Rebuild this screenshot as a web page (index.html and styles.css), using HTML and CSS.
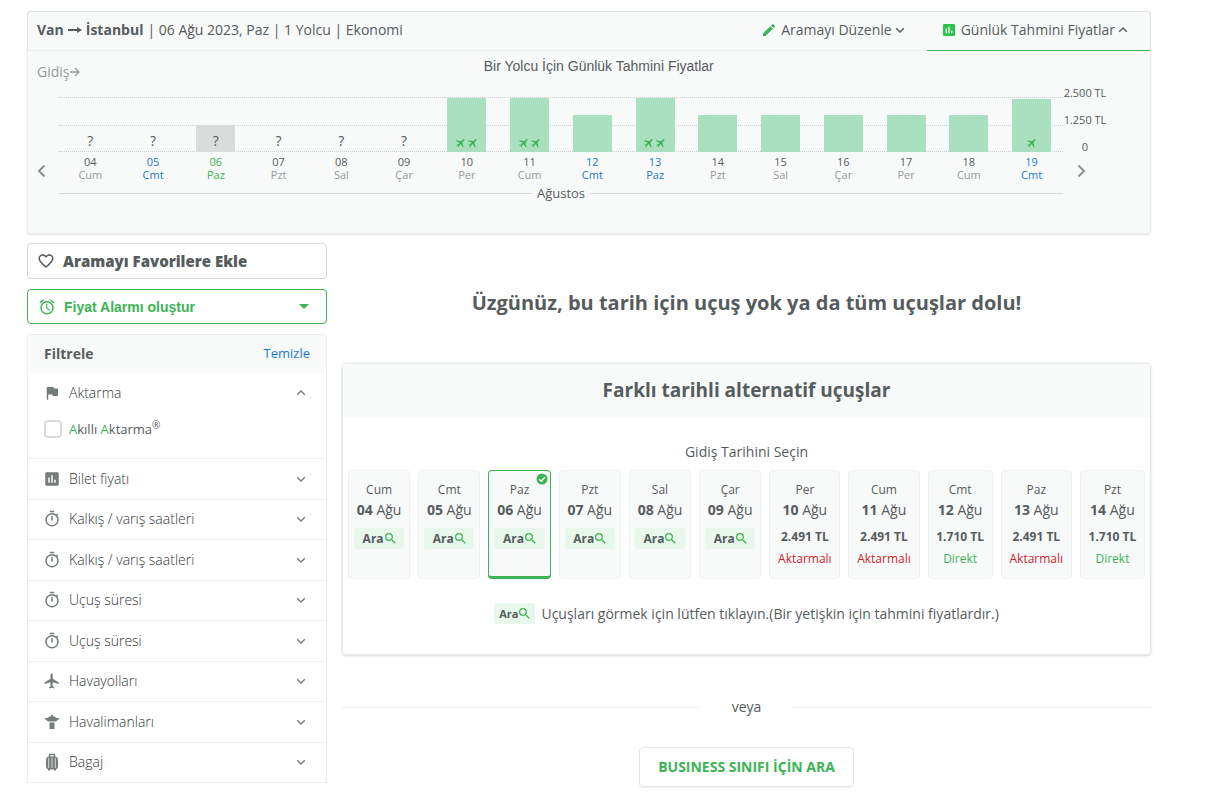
FILE: index.html
```html
<!DOCTYPE html>
<html lang="tr">
<head>
<meta charset="utf-8">
<meta name="viewport" content="width=device-width, initial-scale=1">
<title>Van - İstanbul uçuşları</title>
<link rel="stylesheet" href="styles.css">
</head>
<body>
<svg class="sprite" aria-hidden="true">
  <symbol id="chevron" viewBox="0 0 10 10"><path d="M1.2 3.2 5 7l3.800-3.800" fill="none" stroke="currentColor" stroke-width="1.400"/></symbol>
  <symbol id="search" viewBox="3 3 18 18"><path fill="currentColor" d="M15.500 14h-.79l-.28-.27A6.470 6.470 0 0 0 16 9.500 6.500 6.500 0 1 0 9.500 16c1.610 0 3.090-.59 4.230-1.570l.27.28v.79l5 4.990L20.490 19l-4.990-5zm-6 0C7.010 14 5 11.990 5 9.500S7.010 5 9.500 5 14 7.010 14 9.500 11.990 14 9.500 14z"/></symbol>
  <symbol id="plane" viewBox="0 0 24 24"><path fill="currentColor" d="M21 16v-2l-8-5V3.500C13 2.670 12.330 2 11.500 2S10 2.670 10 3.500V9l-8 5v2l8-2.500V19l-2 1.500V22l3.500-1 3.500 1v-1.500L13 19v-5.500l8 2.500z"/></symbol>
  <symbol id="stats" viewBox="0 0 24 24"><path fill="currentColor" d="M19 3H5c-1.100 0-2 .9-2 2v14c0 1.100.9 2 2 2h14c1.100 0 2-.9 2-2V5c0-1.100-.9-2-2-2zM9 17H7v-7h2v7zm4 0h-2V7h2v10zm4 0h-2v-4h2v4z"/></symbol>
  <symbol id="timer" viewBox="0 0 24 24"><path fill="currentColor" d="M15 1H9v2h6V1zm-4 13h2V8h-2v6zm8.030-6.610 1.420-1.420c-.43-.51-.9-.99-1.410-1.410l-1.420 1.420A8.960 8.960 0 0 0 12 4a9 9 0 1 0 7.030 3.390zM12 20a7 7 0 1 1 0-14 7 7 0 0 1 0 14z"/></symbol>
</svg>

<main class="page">
  <section class="trip">
    <header class="trip-bar">
      <p class="route"><strong>Van</strong>
        <svg class="route-arrow" viewBox="0 0 14 10" aria-hidden="true"><path d="M0 5h10" stroke="currentColor" stroke-width="2"/><path d="M9 2l5 3-5 3z" fill="currentColor"/></svg>
        <strong>İstanbul</strong><span>| 06 Ağu 2023, Paz | 1 Yolcu | Ekonomi</span></p>
      <button class="tab" type="button">
        <svg class="i16 green" viewBox="0 0 24 24" aria-hidden="true"><path fill="currentColor" d="M3 17.250V21h3.750L17.810 9.940l-3.750-3.750L3 17.250zM20.710 7.040a1 1 0 0 0 0-1.410l-2.340-2.340a1 1 0 0 0-1.410 0l-1.830 1.830 3.750 3.750 1.830-1.830z"/></svg>
        <span>Aramayı Düzenle</span><svg class="i10"><use href="#chevron"/></svg>
      </button>
      <button class="tab tab-on" type="button">
        <svg class="i16 bright"><use href="#stats"/></svg>
        <span>Günlük Tahmini Fiyatlar</span><svg class="i10 up"><use href="#chevron"/></svg>
      </button>
    </header>

    <div class="prices">
      <div class="prices-head">
        <span class="leg">Gidiş<svg class="i12" viewBox="0 0 12 12" aria-hidden="true"><path d="M1 6h9M6 2l4 4-4 4" fill="none" stroke="currentColor" stroke-width="1.400"/></svg></span>
        <h2 class="prices-title">Bir Yolcu İçin Günlük Tahmini Fiyatlar</h2>
      </div>
      <div class="chart">
        <button class="arrow prev" type="button" aria-label="Önceki günler"><svg viewBox="0 0 9 14"><path d="M7.500 1.500 2 7l5.500 5.500" fill="none" stroke="currentColor" stroke-width="2"/></svg></button>
        <div class="plot">
          <div class="rules"><i></i><i></i></div>
          <ul class="days">
            <li><div class="slot">?</div><b>04</b><span>Cum</span></li>
            <li class="weekend"><div class="slot">?</div><b>05</b><span>Cmt</span></li>
            <li class="today"><div class="slot"><em>?</em></div><b>06</b><span>Paz</span></li>
            <li><div class="slot">?</div><b>07</b><span>Pzt</span></li>
            <li><div class="slot">?</div><b>08</b><span>Sal</span></li>
            <li><div class="slot">?</div><b>09</b><span>Çar</span></li>
            <li><div class="slot"><div class="bar" style="height:98%"><svg><use href="#plane"/></svg><svg><use href="#plane"/></svg></div></div><b>10</b><span>Per</span></li>
            <li><div class="slot"><div class="bar" style="height:98%"><svg><use href="#plane"/></svg><svg><use href="#plane"/></svg></div></div><b>11</b><span>Cum</span></li>
            <li class="weekend"><div class="slot"><div class="bar" style="height:67%"></div></div><b>12</b><span>Cmt</span></li>
            <li class="weekend"><div class="slot"><div class="bar" style="height:98%"><svg><use href="#plane"/></svg><svg><use href="#plane"/></svg></div></div><b>13</b><span>Paz</span></li>
            <li><div class="slot"><div class="bar" style="height:67%"></div></div><b>14</b><span>Pzt</span></li>
            <li><div class="slot"><div class="bar" style="height:67%"></div></div><b>15</b><span>Sal</span></li>
            <li><div class="slot"><div class="bar" style="height:67%"></div></div><b>16</b><span>Çar</span></li>
            <li><div class="slot"><div class="bar" style="height:67%"></div></div><b>17</b><span>Per</span></li>
            <li><div class="slot"><div class="bar" style="height:67%"></div></div><b>18</b><span>Cum</span></li>
            <li class="weekend"><div class="slot"><div class="bar" style="height:96%"><svg><use href="#plane"/></svg></div></div><b>19</b><span>Cmt</span></li>
          </ul>
          <div class="month">Ağustos</div>
        </div>
        <div class="scale">
          <span>2.500 TL</span><span>1.250 TL</span><span>0</span>
          <button class="arrow next" type="button" aria-label="Sonraki günler"><svg viewBox="0 0 9 14"><path d="M1.500 1.500 7 7l-5.500 5.500" fill="none" stroke="currentColor" stroke-width="2"/></svg></button>
        </div>
      </div>
    </div>
  </section>

  <div class="columns">
    <aside class="side">
      <button class="favorite" type="button">
        <svg class="i18" viewBox="0 0 24 24" aria-hidden="true"><path fill="currentColor" d="M16.500 3c-1.740 0-3.410.81-4.500 2.090C10.910 3.810 9.240 3 7.500 3 4.420 3 2 5.420 2 8.500c0 3.780 3.400 6.860 8.550 11.540L12 21.350l1.450-1.320C18.600 15.360 22 12.280 22 8.500 22 5.420 19.580 3 16.500 3zm-4.400 15.550-.1.100-.1-.1C7.140 14.240 4 11.390 4 8.500 4 6.500 5.500 5 7.500 5c1.540 0 3.040.99 3.570 2.360h1.870C13.460 5.990 14.960 5 16.500 5c2 0 3.500 1.500 3.500 3.500 0 2.890-3.140 5.740-7.900 10.050z"/></svg>
        <span>Aramayı Favorilere Ekle</span>
      </button>
      <button class="alarm" type="button">
        <svg class="i18" viewBox="0 0 24 24" aria-hidden="true"><path fill="currentColor" d="M22 5.720l-4.600-3.860-1.290 1.530 4.600 3.860L22 5.720zM7.880 3.390 6.600 1.860 2 5.710l1.290 1.530 4.590-3.850zM12.500 8H11v6l4.750 2.850.75-1.230-4-2.370V8zM12 4a9 9 0 1 0 0 18 9 9 0 0 0 0-18zm0 16a7 7 0 1 1 0-14 7 7 0 0 1 0 14z"/></svg>
        <span>Fiyat Alarmı oluştur</span>
        <svg class="caret" viewBox="0 0 10 5" aria-hidden="true"><path fill="currentColor" d="M0 0h10L5 5z"/></svg>
      </button>

      <section class="filters">
        <header class="filters-head"><h2>Filtrele</h2><a href="#">Temizle</a></header>
        <div class="open-filter">
          <button class="filter" type="button"><svg class="i18" viewBox="0 0 24 24"><path fill="currentColor" d="M14.400 6 14 4H5v17h2v-7h5.600l.4 2h7V6z"/></svg><span>Aktarma</span><svg class="i10 up"><use href="#chevron"/></svg></button>
          <label class="check"><input type="checkbox"><span><mark>A</mark>kıllı <mark>A</mark>ktarma<sup>®</sup></span></label>
        </div>
        <div class="filter-list">
          <button class="filter" type="button"><svg class="i18"><use href="#stats"/></svg><span>Bilet fiyatı</span><svg class="i10"><use href="#chevron"/></svg></button>
          <button class="filter" type="button"><svg class="i18"><use href="#timer"/></svg><span>Kalkış / varış saatleri</span><svg class="i10"><use href="#chevron"/></svg></button>
          <button class="filter" type="button"><svg class="i18"><use href="#timer"/></svg><span>Kalkış / varış saatleri</span><svg class="i10"><use href="#chevron"/></svg></button>
          <button class="filter" type="button"><svg class="i18"><use href="#timer"/></svg><span>Uçuş süresi</span><svg class="i10"><use href="#chevron"/></svg></button>
          <button class="filter" type="button"><svg class="i18"><use href="#timer"/></svg><span>Uçuş süresi</span><svg class="i10"><use href="#chevron"/></svg></button>
          <button class="filter" type="button"><svg class="i18"><use href="#plane"/></svg><span>Havayolları</span><svg class="i10"><use href="#chevron"/></svg></button>
          <button class="filter" type="button"><svg class="i18" viewBox="0 0 18 18"><path fill="currentColor" d="M8 2h2v1.500h2L13 5h3v1l-3 2.500H5L2 6V5h3l1-1.500h2zM6.500 9.500h5V16h-5z"/></svg><span>Havalimanları</span><svg class="i10"><use href="#chevron"/></svg></button>
          <button class="filter" type="button"><svg class="i18" viewBox="0 0 18 18"><path d="M6.500 4V1.500h5V4" fill="none" stroke="currentColor" stroke-width="1.400"/><rect x="3" y="3.500" width="12" height="13" rx="3.500" fill="currentColor"/><path d="M5.700 5v10M9 5v10M12.300 5v10" stroke="#fff" stroke-width=".7"/><path d="M5 16h2v1.500H5zM11 16h2v1.500h-2z" fill="currentColor"/></svg><span>Bagaj</span><svg class="i10"><use href="#chevron"/></svg></button>
        </div>
      </section>
    </aside>

    <section class="results">
      <h1 class="sorry">Üzgünüz, bu tarih için uçuş yok ya da tüm uçuşlar dolu!</h1>
      <section class="alternatives">
        <h2 class="alt-title">Farklı tarihli alternatif uçuşlar</h2>
        <p class="alt-sub">Gidiş Tarihini Seçin</p>
        <div class="dates">
          <button class="date" type="button"><span class="dow">Cum</span><span class="dm"><b>04</b> Ağu</span><span class="ara">Ara<svg><use href="#search"/></svg></span></button>
          <button class="date" type="button"><span class="dow">Cmt</span><span class="dm"><b>05</b> Ağu</span><span class="ara">Ara<svg><use href="#search"/></svg></span></button>
          <button class="date chosen" type="button"><svg class="tick" viewBox="0 0 12 12"><circle cx="6" cy="6" r="5.500" fill="currentColor"/><path d="M3.200 6.200l2 2 3.700-3.900" fill="none" stroke="#fff" stroke-width="1.300"/></svg><span class="dow">Paz</span><span class="dm"><b>06</b> Ağu</span><span class="ara">Ara<svg><use href="#search"/></svg></span></button>
          <button class="date" type="button"><span class="dow">Pzt</span><span class="dm"><b>07</b> Ağu</span><span class="ara">Ara<svg><use href="#search"/></svg></span></button>
          <button class="date" type="button"><span class="dow">Sal</span><span class="dm"><b>08</b> Ağu</span><span class="ara">Ara<svg><use href="#search"/></svg></span></button>
          <button class="date" type="button"><span class="dow">Çar</span><span class="dm"><b>09</b> Ağu</span><span class="ara">Ara<svg><use href="#search"/></svg></span></button>
          <button class="date" type="button"><span class="dow">Per</span><span class="dm"><b>10</b> Ağu</span><span class="price">2.491 TL</span><span class="stops">Aktarmalı</span></button>
          <button class="date" type="button"><span class="dow">Cum</span><span class="dm"><b>11</b> Ağu</span><span class="price">2.491 TL</span><span class="stops">Aktarmalı</span></button>
          <button class="date" type="button"><span class="dow">Cmt</span><span class="dm"><b>12</b> Ağu</span><span class="price">1.710 TL</span><span class="direct">Direkt</span></button>
          <button class="date" type="button"><span class="dow">Paz</span><span class="dm"><b>13</b> Ağu</span><span class="price">2.491 TL</span><span class="stops">Aktarmalı</span></button>
          <button class="date" type="button"><span class="dow">Pzt</span><span class="dm"><b>14</b> Ağu</span><span class="price">1.710 TL</span><span class="direct">Direkt</span></button>
        </div>
        <p class="hint"><span class="ara">Ara<svg><use href="#search"/></svg></span><span>Uçuşları görmek için lütfen tıklayın.(Bir yetişkin için tahmini fiyatlardır.)</span></p>
      </section>
      <div class="or">veya</div>
      <button class="business" type="button">BUSINESS SINIFI İÇİN ARA</button>
    </section>
  </div>
</main>
</body>
</html>
```

FILE: styles.css
```css
* { box-sizing: border-box; margin: 0; }

body {
  background: #fff;
  color: #565c5e;
  font: 14px/20px "Open Sans", "Noto Sans", sans-serif;
}

button { font: inherit; color: inherit; background: none; border: 0; padding: 0; cursor: pointer; }
ul { list-style: none; padding: 0; }
svg { display: block; flex: none; }
.sprite { position: absolute; width: 0; height: 0; }
.i10 { width: 10px; height: 10px; }
.i12 { width: 12px; height: 12px; }
.i16 { width: 16px; height: 16px; }
.i18 { width: 18px; height: 18px; }
.up { transform: rotate(180deg); }
.green { color: #3cb454; }
.bright { color: #2dc44d; }

.page { padding: 11px 64px 12px 27px; }

/* Trip summary and daily prices */
.trip-bar {
  display: flex;
  height: 40px;
  background: #f8f9f9;
  border: 1px solid #dfe2e2;
  border-radius: 3px 3px 0 0;
  border-bottom-color: #edefef;
}
.route { flex: 1; display: flex; align-items: center; gap: 4px; padding: 0 0 2px 9px; white-space: nowrap; }
.route-arrow { width: 14px; height: 10px; }
.tab { display: flex; align-items: center; padding: 0 16px 3px; height: 39px; }
.tab span { margin: 0 3px 0 4px; }
.tab-on { margin-left: 6px; padding: 0 22px 2px 14px; border-bottom: 1px solid #3cb454; }
.prices {
  background: #f8f9f9;
  border: 1px solid #edefef;
  border-top: 0;
  border-radius: 0 0 3px 3px;
  box-shadow: 0 1px 2px #e3e5e5;
  padding: 5px 0 30px 9px;
}
.prices-head { display: flex; padding-right: 34px; }
.leg { display: flex; align-items: center; color: #969a9b; padding-top: 6px; }
.prices-title { flex: 1; text-align: center; font: 14px/20px "Liberation Sans", Arial, sans-serif; }
.chart { display: flex; padding-right: 43px; }
.arrow { color: #8b9192; }
.arrow svg { width: 9px; height: 14px; }
.prev { width: 22px; padding-top: 56px; display: flex; align-items: center; }
.plot { flex: 1; display: grid; padding-top: 15px; }
.rules, .days { grid-area: 1 / 1; }
.rules { height: 55px; display: grid; grid-template-rows: 28px 26px; border-bottom: 1px dotted #ccd0d0; }
.rules i { border-top: 1px dotted #ccd0d0; }
.days { display: grid; grid-template-columns: repeat(16, 1fr); text-align: center; position: relative; }
.days b, .days span { display: block; font: 11px/13px "Open Sans", sans-serif; }
.days b { padding-top: 3px; }
.days span { color: #969a9b; }
.days .weekend b, .days .weekend span { color: #1b78d0; }
.days .today b, .days .today span { color: #3cb454; }
.slot { height: 55px; display: flex; align-items: flex-end; justify-content: center; line-height: 22px; }
.slot em { width: 39px; height: 27px; padding-top: 5px; background: #d8dcdb; font-style: normal; }
.bar { width: 39px; background: #a8e0c0; display: flex; align-items: flex-end; justify-content: center; padding-bottom: 3px; }
.bar svg { width: 12px; height: 12px; color: #3cb454; transform: rotate(45deg); }
.month { display: flex; align-items: center; gap: 5px; font-size: 13px; padding-top: 2px; }
.month::before, .month::after { content: ""; flex: 1; height: 1px; background: #d7dada; }
.scale { width: 44px; margin-top: -3px; display: flex; flex-direction: column; align-items: center; font-size: 11px; line-height: 27px; white-space: nowrap; }
.next { margin-right: 8px; padding-top: 4px; }

/* Left column */
.columns { display: flex; align-items: flex-start; gap: 15px; padding-top: 9px; }
.side { width: 300px; flex: none; }
.favorite, .alarm { width: 100%; display: flex; align-items: center; border-radius: 4px; text-align: left; }
.favorite { height: 36px; padding: 0 9px; gap: 8px; border: 1px solid #d7d9d9; font-size: 15px; font-weight: 800; }
.alarm { height: 35px; margin: 10px 0; padding: 0 17px 0 10px; gap: 8px; border: 1px solid #3cb454; color: #3cb454; font: bold 14px/20px "Liberation Sans", Arial, sans-serif; }
.alarm span { flex: 1; }
.caret { width: 10px; height: 5px; }
.filters { border: 1px solid #edefef; border-bottom: 0; border-radius: 3px 3px 0 0; }
.filters-head { display: flex; justify-content: space-between; padding: 9px 16px; background: #f8f9f9; }
.filters-head h2 { font-size: 14px; line-height: 20px; }
.filters-head a { font-size: 13px; line-height: 18px; color: #1b78d0; text-decoration: none; }
.open-filter { padding-bottom: 19px; border-bottom: 1px solid #edefef; }
.filter { width: 100%; display: flex; align-items: center; gap: 8px; padding: 10px 20px 10px 15px; text-align: left; font-weight: 300; color: #33383a; }
.filter svg { color: #747c7c; }
.filter span { flex: 1; }
.filter-list { display: grid; grid-auto-rows: 1fr; min-height: 324px; }
.filter-list .filter { padding: 9px 20px 9px 15px; border-bottom: 1px solid #edefef; }
.check { display: flex; align-items: center; gap: 7px; padding: 6px 16px 0; font-size: 13px; }
.check input { appearance: none; width: 18px; height: 18px; margin: 0; border: 2px solid #d9dcdc; border-radius: 4px; background: #fff; }
.check mark { background: none; color: #3cb454; }
.check sup { font-size: 10px; line-height: 0; }

/* Results */
.results { flex: 1; min-width: 0; }
.sorry { text-align: center; font-size: 20px; line-height: 28px; padding: 46px 0; }
.alternatives { border: 1px solid #e6e8e8; border-radius: 4px; box-shadow: 0 1px 3px #d4d6d6; padding-bottom: 30px; }
.alt-title { background: #f8f9f9; text-align: center; font-size: 19px; line-height: 28px; padding: 12px 0 13px; }
.alt-sub { text-align: center; padding: 25px 0 8px; }
.dates { display: flex; gap: 8px; padding: 0 5px; }
.date {
  flex: 1 1 auto;
  height: 109px;
  display: flex;
  flex-direction: column;
  justify-content: flex-start;
  align-items: center;
  position: relative;
  padding: 9px 5px 0;
  background: #f8f9f9;
  border: 1px solid #eff1f1;
  border-radius: 4px;
  white-space: nowrap;
}
.chosen { border: 1px solid #3cb454; border-bottom-width: 3px; }
.tick { position: absolute; top: 2px; right: 2px; width: 12px; height: 12px; color: #3cb454; }
.dow, .stops, .direct { font-size: 12px; }
.ara { display: flex; align-items: center; justify-content: center; gap: 1px; font-size: 12px; font-weight: 700; background: #e8f7ec; border-radius: 3px; line-height: 21px; }
.ara svg { width: 11px; height: 11px; color: #3cb454; }
.date .ara { width: 100%; margin-top: 8px; }
.price { margin-top: 7px; font-size: 12px; font-weight: 700; }
.stops, .direct { margin-top: 2px; }
.stops { color: #c8282e; }
.direct { color: #3cb454; }
.hint { display: flex; align-items: center; justify-content: center; gap: 6px; padding-top: 24px; }
.hint .ara { padding: 0 5px; font-size: 11px; }
.or { display: flex; align-items: center; gap: 32px; margin: 42px 0 30px; }
.or::before, .or::after { content: ""; flex: 1; height: 1px; background: #efefef; }
.business {
  display: block;
  margin: 0 auto;
  height: 40px;
  padding: 0 18px;
  border: 1px solid #e3e6e6;
  border-radius: 4px;
  box-shadow: 0 1px 2px #f0f1f1;
  color: #3cb454;
  font-weight: 700;
}
```
